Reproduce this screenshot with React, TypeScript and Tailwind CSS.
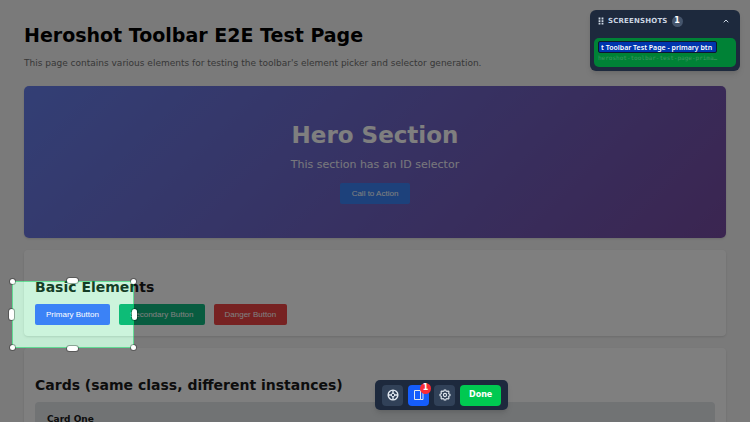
import { clsx } from 'clsx';
import { ChevronUp } from 'lucide-react';

const demoButtons = [
  { label: 'Primary Button', style: 'bg-[#3b82f6] z-20' },
  { label: 'Secondary Button', style: 'bg-[#10b981]' },
  { label: 'Danger Button', style: 'bg-[#ef4444]' },
];

const handles = [
  { id: 'nw', style: '-left-0.5 -top-0.5 size-[5px]' },
  { id: 'ne', style: '-right-0.5 -top-0.5 size-[5px]' },
  { id: 'sw', style: '-left-0.5 -bottom-0.5 size-[5px]' },
  { id: 'se', style: '-right-0.5 -bottom-0.5 size-[5px]' },
  { id: 'n', style: 'left-1/2 -ml-[6px] -top-[3px] h-[5px] w-[11px]' },
  { id: 's', style: 'left-1/2 -ml-[6px] -bottom-[3px] h-[5px] w-[11px]' },
  { id: 'w', style: 'top-1/2 -mt-[6px] -left-[3px] h-[11px] w-[5px]' },
  { id: 'e', style: 'top-1/2 -mt-[6px] -right-[3px] h-[11px] w-[5px]' },
];

function PickerIcon() {
  return (
    <svg viewBox="0 0 24 24" className="size-3" fill="none" stroke="currentColor" strokeWidth="2.8">
      <circle cx="12" cy="12" r="9.7" />
      <circle cx="12" cy="12" r="3.4" strokeWidth="2" />
      <path d="M12 2v6.5M12 15.500v6.500M2 12h6.500M15.500 12H22" />
    </svg>
  );
}

function PanelIcon() {
  return (
    <svg viewBox="0 0 24 24" className="size-3" fill="none" stroke="currentColor" strokeWidth="2">
      <path d="M3 3h12v18H3zM15 5h5v16h-5" />
    </svg>
  );
}

function GearIcon() {
  return (
    <svg viewBox="0 0 24 24" className="size-3" fill="none" stroke="currentColor" strokeWidth="2.2" strokeLinejoin="round">
      <path d="M9.8 4.2 10.4 2h3.2l.6 2.2 1.9.8 2-1.200 2.100 2.100-1.200 2 .8 1.900 2.200.6v3.200l-2.200.6-.8 1.900 1.200 2-2.100 2.100-2-1.200-1.900.8-.6 2.200h-3.200l-.6-2.200-1.900-.8-2 1.200-2.100-2.100 1.200-2-.8-1.900L2 13.600v-3.200l2.200-.6.8-1.900-1.200-2 2.100-2.100 2 1.200z" />
      <circle cx="12" cy="12" r="3.2" />
    </svg>
  );
}

function GripIcon() {
  return (
    <svg viewBox="0 0 6 8" className="h-2 w-1.5" fill="currentColor">
      <path d="M.6.6h1.8v1.8H.6zM3.6.6h1.8v1.8H3.6zM.6 3.2h1.8V5H.6zM3.6 3.2h1.8V5H3.6zM.6 5.8h1.8v1.8H.6zM3.6 5.8h1.8v1.8H3.6z" />
    </svg>
  );
}

function TestPage() {
  return (
    <main className="px-6 pt-6">
      <h1 className="text-[19px] leading-[22px] font-bold text-black">Heroshot Toolbar E2E Test Page</h1>
      <p className="mt-2.5 text-[9px] leading-[14px] text-[#707070]">
        This page contains various elements for testing the toolbar's element picker and selector generation.
      </p>

      <section className="mt-4 flex flex-col items-center rounded-[5px] bg-[linear-gradient(135deg,#667eea_0%,#764ba2_100%)] pt-[33px] pb-[34px] text-white shadow-sm">
        <h2 className="text-[23px] leading-8 font-bold">Hero Section</h2>
        <p className="mt-1.5 text-[11px] leading-4 opacity-90">This section has an ID selector</p>
        <button className="mt-2.5 h-[21px] rounded-[2px] bg-[#3b82f6] px-3 font-['Liberation_Sans',sans-serif] text-[8px]">Call to Action</button>
      </section>

      <section className="mt-3 rounded-[4px] bg-white px-[11px] pt-[27px] pb-[11px] shadow-sm">
        <h2 className="text-[14px] leading-5 font-bold text-[#1a1a1a]">Basic Elements</h2>
        <div className="mt-[7px] flex gap-[9px]">
          {demoButtons.map((b) => (
            <button key={b.label} className={clsx("relative h-[21px] rounded-[2px] px-[11px] font-['Liberation_Sans',sans-serif] text-[8px] text-white", b.style)}>
              {b.label}
            </button>
          ))}
        </div>
      </section>

      <section className="mt-3 rounded-[4px] bg-white px-[11px] pt-[27px] pb-[11px] shadow-sm">
        <h2 className="text-[14px] leading-5 font-bold text-[#1a1a1a]">Cards (same class, different instances)</h2>
        <article className="mt-[7px] rounded-[4px] bg-[#e2e6e9] px-3 py-[11px]">
          <h3 className="text-[9px] leading-3 font-bold text-[#1a1a1a]">Card One</h3>
        </article>
      </section>
    </main>
  );
}

// Dims everything outside its own box with a very large shadow.
function Selection() {
  return (
    <>
      <div className="absolute top-[281px] left-3 z-10 h-[67px] w-[122px] border border-[#00c951]/50 bg-[#00c951]/20" />
      <div className="absolute top-[281px] left-3 z-30 h-[67px] w-[122px] shadow-[0_0_0_2000px_rgba(0,0,0,0.5)]">
        {handles.map((h) => (
          <span key={h.id} className={clsx('absolute rounded-full bg-white shadow-[0_0_0_1px_rgba(0,0,0,0.3)]', h.style)} />
        ))}
      </div>
    </>
  );
}

function ScreenshotsPanel() {
  return (
    <aside className="absolute top-2.5 right-2.5 z-40 w-[150px] rounded-md bg-[#1d293d] px-1 pb-1 shadow-md">
      <header className="flex h-[22px] items-center px-1 text-[#cad5e2]">
        <GripIcon />
        <h2 className="ml-1 text-[7px] font-bold tracking-wide">SCREENSHOTS</h2>
        <span className="ml-1 flex size-[11px] items-center justify-center rounded-full bg-[#45556c] text-[8px] font-bold text-white">1</span>
        <button aria-label="Collapse" className="ml-auto pr-0.5">
          <ChevronUp size={8} strokeWidth={3} />
        </button>
      </header>
      <div className="mt-1.5 flex h-[29px] flex-col rounded-[5px] bg-[#008236] px-1 pt-[3px]">
        <input
          aria-label="Screenshot name"
          readOnly
          value="t Toolbar Test Page - primary btn"
          className="h-3 w-[119px] rounded-[2px] border border-[#0f172b] bg-[#0035ad] px-0.5 font-['Noto_Sans',sans-serif] text-[7px] font-semibold text-white outline-none"
        />
        <p className="truncate font-['DejaVu_Sans_Mono',monospace] text-[6px] leading-[10px] text-[#3f9560]">heroshot-toolbar-test-page-prima…</p>
      </div>
    </aside>
  );
}

function Toolbar() {
  return (
    <nav className="absolute bottom-3 left-1/2 z-40 flex h-[30px] items-center gap-[5px] rounded-[5px] bg-[#1d293d] px-[7px] text-[#e2e8f0] shadow-md">
      <button aria-label="Pick element" className="flex size-[21px] items-center justify-center rounded-[4px] bg-[#314158]">
        <PickerIcon />
      </button>
      <button aria-label="Screenshots" className="relative flex size-[21px] items-center justify-center rounded-[4px] bg-[#155dfc]">
        <PanelIcon />
        <span className="absolute -top-[2px] -right-[2px] flex size-[11px] items-center justify-center rounded-full bg-[#fb2c36] text-[8px] font-bold text-white">1</span>
      </button>
      <button aria-label="Settings" className="flex size-[21px] items-center justify-center rounded-[4px] bg-[#314158]">
        <GearIcon />
      </button>
      <button className="h-[21px] rounded-[4px] bg-[#00c951] px-[9px] text-[8px] font-bold text-white">Done</button>
    </nav>
  );
}

export default function App() {
  return (
    <div className="relative h-screen overflow-hidden bg-[#f5f5f5] font-['DejaVu_Sans',sans-serif]">
      <TestPage />
      <Selection />
      <ScreenshotsPanel />
      <Toolbar />
    </div>
  );
}
